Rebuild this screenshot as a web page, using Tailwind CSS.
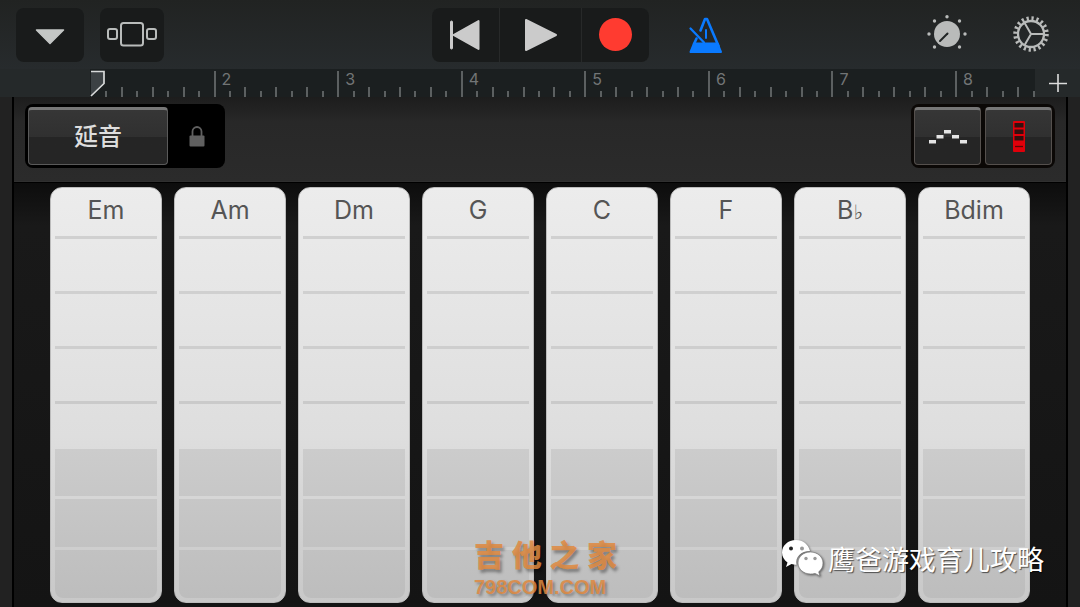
<!DOCTYPE html>
<html lang="zh-CN">
    <head>
        <meta charset="utf-8">
        <meta name="viewport" content="width=device-width, initial-scale=1">

        <title>延音</title>

        <script src="https://cdn.jsdelivr.net/npm/@tailwindcss/browser@4"></script>
    </head>

    <body class="relative flex flex-col h-screen overflow-hidden bg-[#222] font-['Inter','Noto_Sans_CJK_SC',sans-serif]">
        <header class="grid grid-cols-[1fr_auto_1fr] items-center h-[69px] shrink-0 px-4 bg-linear-to-b from-[#212322] to-[#272b2d]" role="banner">
            <div class="flex gap-4">
                <button aria-label="Browser" class="flex justify-center items-center w-[68px] h-[54px] rounded-lg bg-[#191b1b]">
                    <svg class="w-8 h-5" viewBox="0 0 32 20" fill="#c4c7c6" stroke="#c4c7c6" stroke-width="1.5" stroke-linejoin="round">
                        <path d="M2.500 5h27L16 18.500z"/>
                    </svg>
                </button>
                <button aria-label="Tracks" class="flex justify-center items-center w-16 h-[54px] rounded-lg bg-[#191b1b]">
                    <svg class="w-[52px] h-7" viewBox="0 0 52 28" fill="none" stroke="#b9bcbb" stroke-width="2">
                        <rect x="15" y="2" width="22" height="22.500" rx="2.500"/>
                        <rect x="2" y="8" width="9" height="10" rx="2"/>
                        <rect x="41" y="8" width="9" height="10" rx="2"/>
                    </svg>
                </button>
            </div>

            <div class="flex gap-px h-[54px] rounded-lg overflow-hidden bg-[#272929]">
                <button aria-label="Go to beginning" class="flex justify-center items-center w-[67px] bg-[#191b1b]">
                    <svg class="w-8 h-8" viewBox="0 0 32 32" fill="#cbcbcb" stroke="#cbcbcb" stroke-linejoin="round">
                        <rect x="1.500" y="2" width="2" height="28" rx="1"/>
                        <path d="M29.500 2v28L4.500 16z" stroke-width="2"/>
                    </svg>
                </button>
                <button aria-label="Play" class="flex justify-center items-center w-[81px] bg-[#191b1b]">
                    <svg class="w-[34px] h-[34px]" viewBox="0 0 34 34" fill="#cbcbcb" stroke="#cbcbcb" stroke-width="2" stroke-linejoin="round">
                        <path d="M3 2v30l30-15z"/>
                    </svg>
                </button>
                <button aria-label="Record" class="flex justify-center items-center w-[67px] bg-[#191b1b]">
                    <span class="w-[33px] h-[33px] rounded-full bg-[#ff3b30]"></span>
                </button>
            </div>

            <div class="flex justify-between items-center pl-[39px] pr-[13px]">
                <button aria-label="Metronome">
                    <svg class="w-9 h-10" viewBox="0 0 36 40" fill="none" stroke="#0a7aff" stroke-width="2" stroke-linecap="round" stroke-linejoin="round">
                        <path d="M2.500 37L6 28.500h23.500L33 37z" fill="#0a7aff"/>
                        <path d="M12.500 15.500L17 4h2l11.500 27" stroke-width="2.600"/>
                        <path d="M6 29l2.500-5.500" stroke-width="2.600"/>
                        <path d="M18 15v8"/>
                        <path d="M2.500 13.500L16 27.500" stroke-width="2.300"/>
                    </svg>
                </button>
                <div class="flex items-center gap-11">
                    <button aria-label="Track controls">
                        <svg class="w-10 h-10" viewBox="0 0 40 40" fill="#b9bbba">
                            <circle cx="20" cy="19" r="13"/>
                            <path d="M20.500 18.500L13 26" stroke="#222525" stroke-width="2" stroke-linecap="round"/>
                            <circle cx="2" cy="19" r="1.700"/>
                            <circle cx="38" cy="19" r="1.700"/>
                            <circle cx="20" cy="1.700" r="1.700"/>
                            <circle cx="7.500" cy="6" r="1.700"/>
                            <circle cx="32.500" cy="6" r="1.700"/>
                            <circle cx="7.500" cy="32" r="1.700"/>
                            <circle cx="32.500" cy="32" r="1.700"/>
                        </svg>
                    </button>
                    <button aria-label="Settings">
                        <svg class="w-10 h-10" viewBox="0 0 40 40" fill="none" stroke="#b9bbba">
                            <circle cx="20" cy="19" r="15.500" stroke-width="4.500" stroke-dasharray="2.200 2.669"/>
                            <circle cx="20" cy="19" r="13" stroke-width="2.300"/>
                            <path d="M20 19h13M20 19L13.500 7.700M20 19l-6.500 11.300" stroke-width="2"/>
                        </svg>
                    </button>
                </div>
            </div>
        </header>

        <div class="flex h-7 shrink-0 pl-[90px] bg-[#25292a]">
            <div id="js-ruler" class="relative flex flex-1 bg-[#1b1f20]">
                <svg class="absolute left-0 top-0 w-4 h-7" viewBox="0 0 16 28" fill="none">
                    <path d="M1 2h13v12L1 27z" fill="#3c4144"/>
                    <path d="M1 2.500h13v12L1 27" stroke="#d8dada" stroke-width="1.700"/>
                </svg>
            </div>
            <button aria-label="Add section" class="flex justify-center items-center w-[45px]">
                <svg class="w-5 h-5" viewBox="0 0 20 20" stroke="#dcdcdc" stroke-width="1.600">
                    <path d="M10 1v18M1 10.500h18"/>
                </svg>
            </button>
        </div>

        <main role="main" class="flex flex-col flex-1 mx-3 border-x-2 border-black bg-[#171717]">
            <div class="flex justify-between items-start h-[85px] shrink-0 pt-[7px] px-[11px] border-b border-[#303030] bg-linear-to-b from-[#1d1d1d] via-[#282828] via-30% to-[#2b2b2b]">
                <div class="flex w-[200px] h-16 p-[3px] rounded-lg bg-black">
                    <button class="w-[140px] rounded border border-[#5a5a5a] border-t-[3px] border-t-[#777] bg-linear-to-b from-[#363636] from-0% via-[#303030] via-50% to-[#252525] to-50% text-2xl font-medium text-[#dedede]">延音</button>
                    <button aria-label="Lock" class="flex flex-1 justify-center items-center pl-1">
                        <svg class="w-4 h-[22px]" viewBox="0 0 16 22" fill="none">
                            <path d="M3.500 11V6.500a4.500 4.500 0 0 1 9 0V11" stroke="#606060" stroke-width="1.800"/>
                            <rect x="0.500" y="10.500" width="15" height="11" rx="1" fill="#606060"/>
                        </svg>
                    </button>
                </div>

                <div class="flex gap-1 h-16 p-[3px] rounded-lg bg-[#0b0806]">
                    <button aria-label="Arpeggiator" class="flex justify-center items-center w-[67px] rounded border border-[#55504d] border-t-[3px] border-t-[#777] bg-linear-to-b from-[#363636] from-0% via-[#303030] via-50% to-[#252525] to-50%">
                        <svg class="w-[38px] h-4" viewBox="0 0 38 16" fill="#e4e4e4">
                            <path d="M0 11h7v3.500H0zM7.500 6h7v3.500h-7zM15 1h7v3.500h-7zM23 6h7v3.500h-7zM31 11h7v3.500h-7z"/>
                        </svg>
                    </button>
                    <button aria-label="Chord strips" class="flex justify-center items-center w-[67px] rounded border border-[#55504d] border-t-[3px] border-t-[#777] bg-linear-to-b from-[#363636] from-0% via-[#303030] via-50% to-[#252525] to-50%">
                        <svg class="w-[14px] h-8" viewBox="0 0 14 32">
                            <rect x="1" y="0" width="12" height="31" rx="1" fill="#e0000a"/>
                            <path d="M2.500 2h9v4.500h-9zM2.500 8.500h9v4.500h-9zM2.500 15h9v4.500h-9z" fill="#33100f"/>
                            <path d="M3 25.500h8" stroke="#5a0505" stroke-width="1.300"/>
                        </svg>
                    </button>
                </div>
            </div>

            <div id="js-strips" class="grid grid-cols-8 gap-3 flex-1 pt-1 pb-1 px-9 border-t border-black bg-linear-to-b from-[#0d0d0d] via-[#191919] via-10% to-[#141414]"></div>
        </main>

        <div class="absolute left-[474px] bottom-1.5 w-[143px] text-[#e0893f]/85 pointer-events-none">
            <div class="flex justify-between text-3xl/9 font-black text-shadow-[2px_3px_3px_rgb(0_0_0/0.35)]">
                <span>吉</span><span>他</span><span>之</span><span>家</span>
            </div>
            <div class="font-['Liberation_Sans',sans-serif] text-xl/7 font-bold text-shadow-[2px_2px_3px_rgb(0_0_0/0.35)]">798COM.COM</div>
        </div>

        <div class="absolute right-9 bottom-7 flex items-center gap-1 text-white pointer-events-none">
            <svg class="w-[43px] h-[38px] drop-shadow-[1px_1px_1px_rgb(0_0_0/0.5)]" viewBox="0 0 43 38" fill="#fff">
                <path d="M15 0C7 0 1 5.500 1 12.500c0 4 2 7.500 5.500 10L5 27l5.500-3c1.500.5 3 .7 5 .7C14 17 20 11 29 11 27.500 4.500 22 0 15 0z"/>
                <path d="M29.500 12C22 12 17 17 17 23s5.500 11 12.500 11c1.500 0 3-.2 4.500-.6l5 2.600-1.300-4.200c3-2.200 4.300-5.300 4.300-8.800 0-6-5.500-11-12.500-11z" stroke="#777" stroke-width=".7"/>
                <circle cx="10" cy="8.500" r="2" fill="#222"/>
                <circle cx="21" cy="8.500" r="2" fill="#999"/>
                <circle cx="25" cy="18.500" r="1.700" fill="#999"/>
                <circle cx="34" cy="18.500" r="1.700" fill="#999"/>
            </svg>
            <span class="text-[27px]/10 font-['Noto_Sans_CJK_SC',sans-serif] text-shadow-[1px_1px_1px_rgb(0_0_0/0.6)]">鹰爸游戏育儿攻略</span>
        </div>

        <script>
    const ruler = document.getElementById('js-ruler');

    // eight ticks to a bar, the last bar runs off after six
    for (let bar = 1; bar <= 8; bar++) {
        const count = bar === 8 ? 6 : 8;
        let ticks = '';
        for (let i = 0; i < count; i++) {
            let size = i % 2 ? 'h-1.5' : 'h-2.5';
            if (i === 0) size = bar === 1 ? 'h-0' : 'h-[26px]';
            const width = i === 5 && bar === 8 ? 'w-0.5' : 'flex-1';
            ticks += `<span class="${width}"><span class="block w-0.5 bg-[#5c6061] ${size}"></span></span>`;
        }
        ruler.insertAdjacentHTML('beforeend', `
            <div class="relative flex items-end ${bar === 8 ? 'w-20 shrink-0' : 'flex-1'}">
                ${ticks}
                ${bar > 1 ? `<span class="absolute left-2 top-0 text-base/5 text-[#727576]">${bar}</span>` : ''}
            </div>`);
    }

    const flat = `<span class="font-['DejaVu_Sans',sans-serif] text-xl/5">♭</span>`;
    const chords = ['Em', 'Am', 'Dm', 'G', 'C', 'F', `B${flat}`, 'Bdim'];

    document.getElementById('js-strips').innerHTML = chords.map(chord => `
        <section class="flex flex-col px-1 pb-1 rounded-xl border border-[#bcbcbc] bg-linear-to-b from-[#ececec] via-[#dedede] via-60% to-[#c8c8c8]">
            <h2 class="h-12 shrink-0 text-center text-[25px]/[44px] text-[#555]">${chord}</h2>
            <div class="flex-[52] border-t-[3px] border-[#d0d0d0]"></div>
            <div class="flex-[52] border-t-[3px] border-[#d0d0d0]"></div>
            <div class="flex-[52] border-t-[3px] border-[#cecece]"></div>
            <div class="flex-[44] border-t-[3px] border-[#cacaca]"></div>
            <div class="flex flex-col flex-[149] rounded-b-lg bg-linear-to-b from-[#cccccc] to-[#bdbdbd]">
                <div class="flex-1 border-b-[3px] border-[#d6d6d6]"></div>
                <div class="flex-1 border-b-[3px] border-[#cecece]"></div>
                <div class="flex-1"></div>
            </div>
        </section>`).join('');
        </script>
    </body>
</html>
